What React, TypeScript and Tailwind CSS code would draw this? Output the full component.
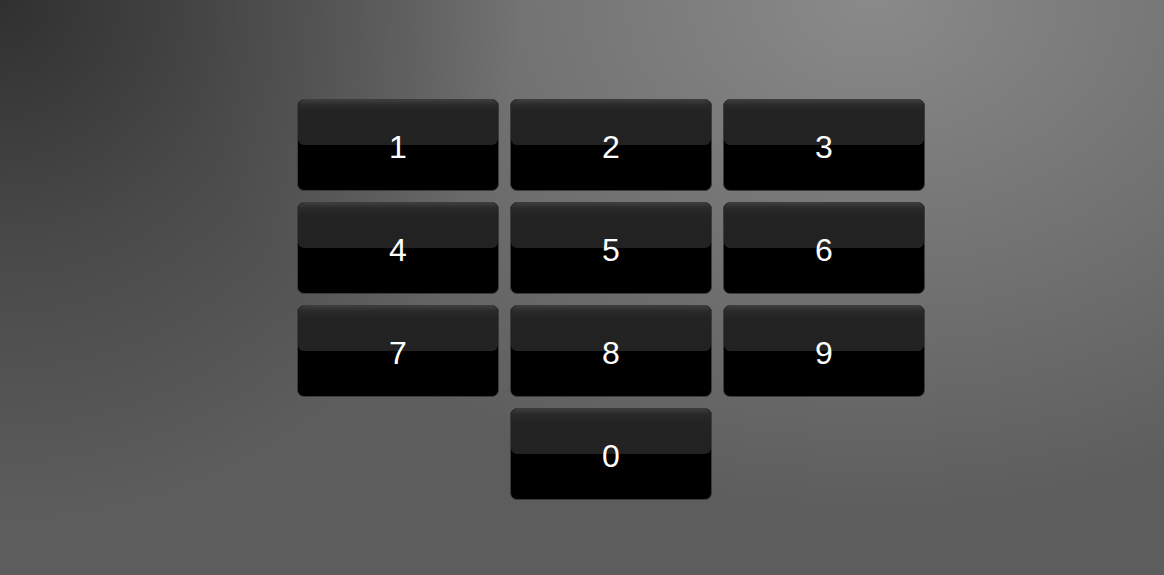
import React from 'react'

// Keypad rows - last row only has 0 in the middle column
const keys: (string | null)[] = ['1', '2', '3', '4', '5', '6', '7', '8', '9', null, '0', null]

function Key({ label }: { label: string }) {
    return (
        <button className="relative w-[202px] h-[92px] rounded-[7px] border border-[#3c3c3c] bg-black overflow-hidden">
            {/* glossy upper half */}
            <div className="absolute left-0 right-0 top-0 h-[45px] rounded-b-[6px] bg-[linear-gradient(to_bottom,#3d3d3d_0px,#2a2a2a_5px,#232323_12px,#222222_100%)]" />
            <span className="relative flex h-full items-center justify-center pt-[3px] text-[32px] leading-none text-white font-['Liberation_Sans',Arial,sans-serif]">
                {label}
            </span>
        </button>
    )
}

export default function App() {
    return (
        <div className="min-h-[575px] w-full bg-[radial-gradient(circle_at_0%_0%,#303030_0px,rgba(60,60,60,0.6)_250px,rgba(90,90,90,0)_520px),radial-gradient(ellipse_60%_90%_at_75%_0%,#8a8a8a_0%,#7a7a7a_35%,#5d5d5d_100%)] bg-[#5d5d5d]">
            <div className="pl-[297px] pt-[99px]">
                <div className="grid grid-cols-[repeat(3,202px)] gap-x-[11px] gap-y-[11px]">
                    {keys.map((k, i) =>
                        k ? <Key key={i} label={k} /> : <div key={i} />
                    )}
                </div>
            </div>
        </div>
    )
}
